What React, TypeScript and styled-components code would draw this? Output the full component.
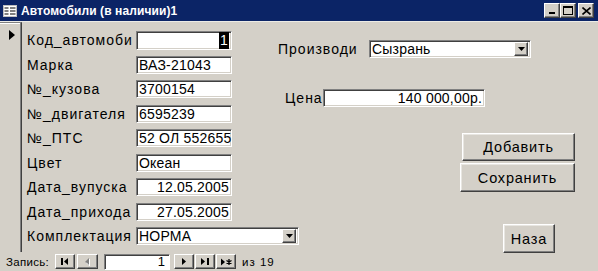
import React from "react";
import styled, { createGlobalStyle } from "styled-components";

const Global = createGlobalStyle`
  html, body { margin: 0; padding: 0; background: #d4d0c8; }
  body { font-family: "Liberation Sans", Arial, sans-serif; }
  * { box-sizing: border-box; }
`;

const Window = styled.div`
  width: 598px;
  height: 271px;
  display: flex;
  flex-direction: column;
  background: #d4d0c8;
  overflow: hidden;
  color: #000;
`;

const TitleBar = styled.div`
  height: 22px;
  flex: none;
  background: #0b2466;
  border-bottom: 1px solid #ecebe6;
  display: flex;
  align-items: center;
  padding: 0 4px 0 3px;
`;

const TitleIcon = styled.svg`
  width: 14px;
  height: 12px;
  flex: none;
  margin-right: 4px;
`;

const TitleText = styled.div`
  flex: 1;
  color: #fff;
  font-weight: bold;
  font-size: 12px;
  letter-spacing: 0.1px;
  white-space: nowrap;
`;

const CaptionButtons = styled.div`
  display: flex;
  align-items: center;
`;

const CaptionButton = styled.div<{ $gap?: number }>`
  width: 16px;
  height: 15px;
  margin-left: ${(p) => p.$gap ?? 0}px;
  background: #d4d0c8;
  border: 1px solid;
  border-color: #fff #404040 #404040 #fff;
  box-shadow: inset -1px -1px #808080;
  display: flex;
  align-items: center;
  justify-content: center;
`;

const Body = styled.div`
  flex: 1;
  display: flex;
  min-height: 0;
`;

const Selector = styled.div`
  width: 22px;
  flex: none;
  border-top: 1px solid #808080;
  border-right: 1px solid #404040;
  box-shadow: inset -1px 0 #808080, inset 0 1px #fff;
  padding: 3px 0 0 9px;
`;

const FormArea = styled.div`
  flex: 1;
  display: flex;
  border-top: 1px solid #d4d0c8;
`;

const LeftFields = styled.div`
  width: 256px;
  flex: none;
  display: grid;
  grid-template-columns: 109px 96px;
  grid-auto-rows: 18px;
  row-gap: 6.5px;
  padding: 8px 0 0 5px;
  align-content: start;
`;

const Label = styled.div<{ $w?: number }>`
  font-size: 14px;
  letter-spacing: 1px;
  line-height: 18px;
  white-space: nowrap;
  ${(p) => (p.$w ? `width: ${p.$w}px; flex: none;` : "")}
`;

const Field = styled.div<{ $w?: number; $right?: boolean; $h?: number }>`
  width: ${(p) => (p.$w ? `${p.$w}px` : "100%")};
  height: ${(p) => p.$h ?? 18}px;
  flex: none;
  background: #fff;
  border: 1px solid;
  border-color: #808080 #fff #fff #808080;
  box-shadow: inset 1px 1px #404040, inset -1px -1px #d4d0c8;
  font-size: 14px;
  letter-spacing: 0.2px;
  line-height: 16px;
  padding: 0 2px 0 2px;
  white-space: nowrap;
  display: flex;
  align-items: center;
  justify-content: ${(p) => (p.$right ? "flex-end" : "flex-start")};
`;

const Selected = styled.span`
  background: #000;
  color: #fff;
  padding: 0 1px;
  line-height: 17px;
`;

const Combo = styled(Field)`
  justify-content: space-between;
  padding-right: 1px;
`;

const DropButton = styled.div`
  width: 14px;
  height: 14px;
  background: #d4d0c8;
  border: 1px solid;
  border-color: #fff #404040 #404040 #fff;
  box-shadow: inset -1px -1px #808080;
  display: flex;
  align-items: center;
  justify-content: center;
  margin-right: 1px;
`;

const RightPane = styled.div`
  flex: 1;
  display: flex;
  flex-direction: column;
  padding: 17px 23px 0 0;
`;

const Row = styled.div<{ $ml?: number; $mt?: number }>`
  display: flex;
  align-items: center;
  margin-left: ${(p) => p.$ml ?? 0}px;
  margin-top: ${(p) => p.$mt ?? 0}px;
`;

const Buttons = styled.div`
  display: flex;
  flex-direction: column;
  align-items: flex-end;
  margin-top: 26px;
`;

const Button = styled.div<{ $w: number; $h: number; $mt?: number; $mr?: number }>`
  width: ${(p) => p.$w}px;
  height: ${(p) => p.$h}px;
  margin-top: ${(p) => p.$mt ?? 0}px;
  margin-right: ${(p) => p.$mr ?? 0}px;
  background: #d4d0c8;
  border: 1px solid;
  border-color: #fff #404040 #404040 #fff;
  box-shadow: inset -1px -1px #808080, inset 1px 1px #e8e6e1;
  font-size: 14.5px;
  letter-spacing: 0.8px;
  display: flex;
  align-items: center;
  justify-content: center;
  white-space: nowrap;
`;

const NavBar = styled.div`
  height: 19px;
  flex: none;
  display: flex;
  align-items: center;
  padding: 0 0 0 6px;
  font-size: 11.5px;
`;

const NavLabel = styled.span<{ $ml?: number; $ls?: number }>`
  margin-left: ${(p) => p.$ml ?? 0}px;
  white-space: nowrap;
  letter-spacing: ${(p) => p.$ls ?? 0.3}px;
`;

const NavButton = styled.div<{ $ml?: number; $w?: number }>`
  width: ${(p) => p.$w ?? 20}px;
  height: 15px;
  margin-left: ${(p) => p.$ml ?? 0}px;
  background: #d4d0c8;
  border: 1px solid;
  border-color: #fff #404040 #404040 #fff;
  box-shadow: inset -1px -1px #808080;
  display: flex;
  align-items: center;
  justify-content: center;
`;

const NavField = styled.div<{ $ml?: number }>`
  width: 66px;
  height: 16px;
  margin-left: ${(p) => p.$ml ?? 0}px;
  background: #fff;
  border: 1px solid;
  border-color: #808080 #fff #fff #808080;
  box-shadow: inset 1px 1px #404040;
  font-size: 13px;
  display: flex;
  align-items: center;
  justify-content: flex-end;
  padding-right: 4px;
`;

const DownArrow = () => (
  <svg width="7" height="4" viewBox="0 0 7 4">
    <path d="M0 0h7L3.5 4z" fill="#000" />
  </svg>
);

const fields: { label: string; value: string; right?: boolean }[] = [
  { label: "Марка", value: "ВАЗ-21043" },
  { label: "№_кузова", value: "3700154" },
  { label: "№_двигателя", value: "6595239" },
  { label: "№_ПТС", value: "52 ОЛ 552655" },
  { label: "Цвет", value: "Океан" },
  { label: "Дата_вупуска", value: "12.05.2005", right: true },
  { label: "Дата_прихода", value: "27.05.2005", right: true },
];

export default function App() {
  return (
    <>
      <Global />
      <Window>
        <TitleBar>
          <TitleIcon viewBox="0 0 14 12">
            <rect x="0.5" y="0.5" width="13" height="11" fill="#fff" stroke="#c0c0c0" />
            <rect x="1.5" y="2" width="4" height="2" fill="#808080" />
            <rect x="7" y="2" width="5.5" height="2" fill="#808080" />
            <rect x="1.5" y="5" width="4" height="2" fill="#808080" />
            <rect x="7" y="5" width="5.5" height="2" fill="#808080" />
            <rect x="1.5" y="8" width="4" height="2" fill="#808080" />
            <rect x="7" y="8" width="5.5" height="2" fill="#808080" />
          </TitleIcon>
          <TitleText>Автомобили (в наличии)1</TitleText>
          <CaptionButtons>
            <CaptionButton>
              <svg width="8" height="9" viewBox="0 0 8 9">
                <rect x="1" y="6" width="6" height="2" fill="#000" />
              </svg>
            </CaptionButton>
            <CaptionButton>
              <svg width="10" height="9" viewBox="0 0 10 9">
                <rect x="0.5" y="0.5" width="9" height="8" fill="none" stroke="#000" />
                <rect x="0" y="0" width="10" height="2" fill="#000" />
              </svg>
            </CaptionButton>
            <CaptionButton $gap={2}>
              <svg width="9" height="8" viewBox="0 0 9 8">
                <path d="M0.5 0.5L8.5 7.5M8.5 0.5L0.5 7.5" stroke="#000" strokeWidth="1.6" />
              </svg>
            </CaptionButton>
          </CaptionButtons>
        </TitleBar>
        <Body>
          <Selector>
            <svg width="6" height="10" viewBox="0 0 6 10">
              <path d="M0 0L6 5L0 10z" fill="#000" />
            </svg>
          </Selector>
          <FormArea>
            <LeftFields>
              <Label>Код_автомоби</Label>
              <Field $right $h={19}>
                <Selected>1</Selected>
              </Field>
              {fields.map((f) => (
                <React.Fragment key={f.label}>
                  <Label>{f.label}</Label>
                  <Field $right={f.right}>{f.value}</Field>
                </React.Fragment>
              ))}
              <Label>Комплектация</Label>
              <Combo $w={163}>
                <span>НОРМА</span>
                <DropButton>
                  <DownArrow />
                </DropButton>
              </Combo>
            </LeftFields>
            <RightPane>
              <Row>
                <Label $w={91}>Производи</Label>
                <Combo $w={162}>
                  <span>Сызрань</span>
                  <DropButton>
                    <DownArrow />
                  </DropButton>
                </Combo>
              </Row>
              <Row $ml={7} $mt={31}>
                <Label $w={38}>Цена</Label>
                <Field $w={162} $right>
                  140 000,00р.
                </Field>
              </Row>
              <Buttons>
                <Button $w={113} $h={28}>Добавить</Button>
                <Button $w={115} $h={29} $mt={2}>
                  Сохранить
                </Button>
                <Button $w={52} $h={29} $mt={32} $mr={20}>
                  Наза
                </Button>
              </Buttons>
            </RightPane>
          </FormArea>
        </Body>
        <NavBar>
          <NavLabel>Запись:</NavLabel>
          <NavButton $ml={6}>
            <svg width="8" height="7" viewBox="0 0 8 7">
              <rect x="0" y="0" width="2" height="7" fill="#000" />
              <path d="M7 0L3 3.5L7 7z" fill="#000" />
            </svg>
          </NavButton>
          <NavButton $ml={2} $w={21}>
            <svg width="5" height="8" viewBox="0 0 5 8">
              <path d="M4 0L0 4L4 8z" fill="#808080" />
              <path d="M4.5 1L4.5 8L1 4.5" fill="none" stroke="#fff" strokeWidth="1" />
            </svg>
          </NavButton>
          <NavField $ml={6}>1</NavField>
          <NavButton $ml={4}>
            <svg width="5" height="7" viewBox="0 0 5 7">
              <path d="M0 0L4 3.5L0 7z" fill="#000" />
            </svg>
          </NavButton>
          <NavButton $ml={1}>
            <svg width="8" height="7" viewBox="0 0 8 7">
              <path d="M0 0L4 3.5L0 7z" fill="#000" />
              <rect x="6" y="0" width="2" height="7" fill="#000" />
            </svg>
          </NavButton>
          <NavButton $ml={1}>
            <svg width="11" height="8" viewBox="0 0 11 8">
              <path d="M0 0.5L4 4L0 7.5z" fill="#000" />
              <path d="M8 1V7M5.5 2.5L10.5 5.5M10.5 2.5L5.5 5.5" stroke="#000" strokeWidth="1.3" />
            </svg>
          </NavButton>
          <NavLabel $ml={6} $ls={1}>из 19</NavLabel>
        </NavBar>
      </Window>
    </>
  );
}
